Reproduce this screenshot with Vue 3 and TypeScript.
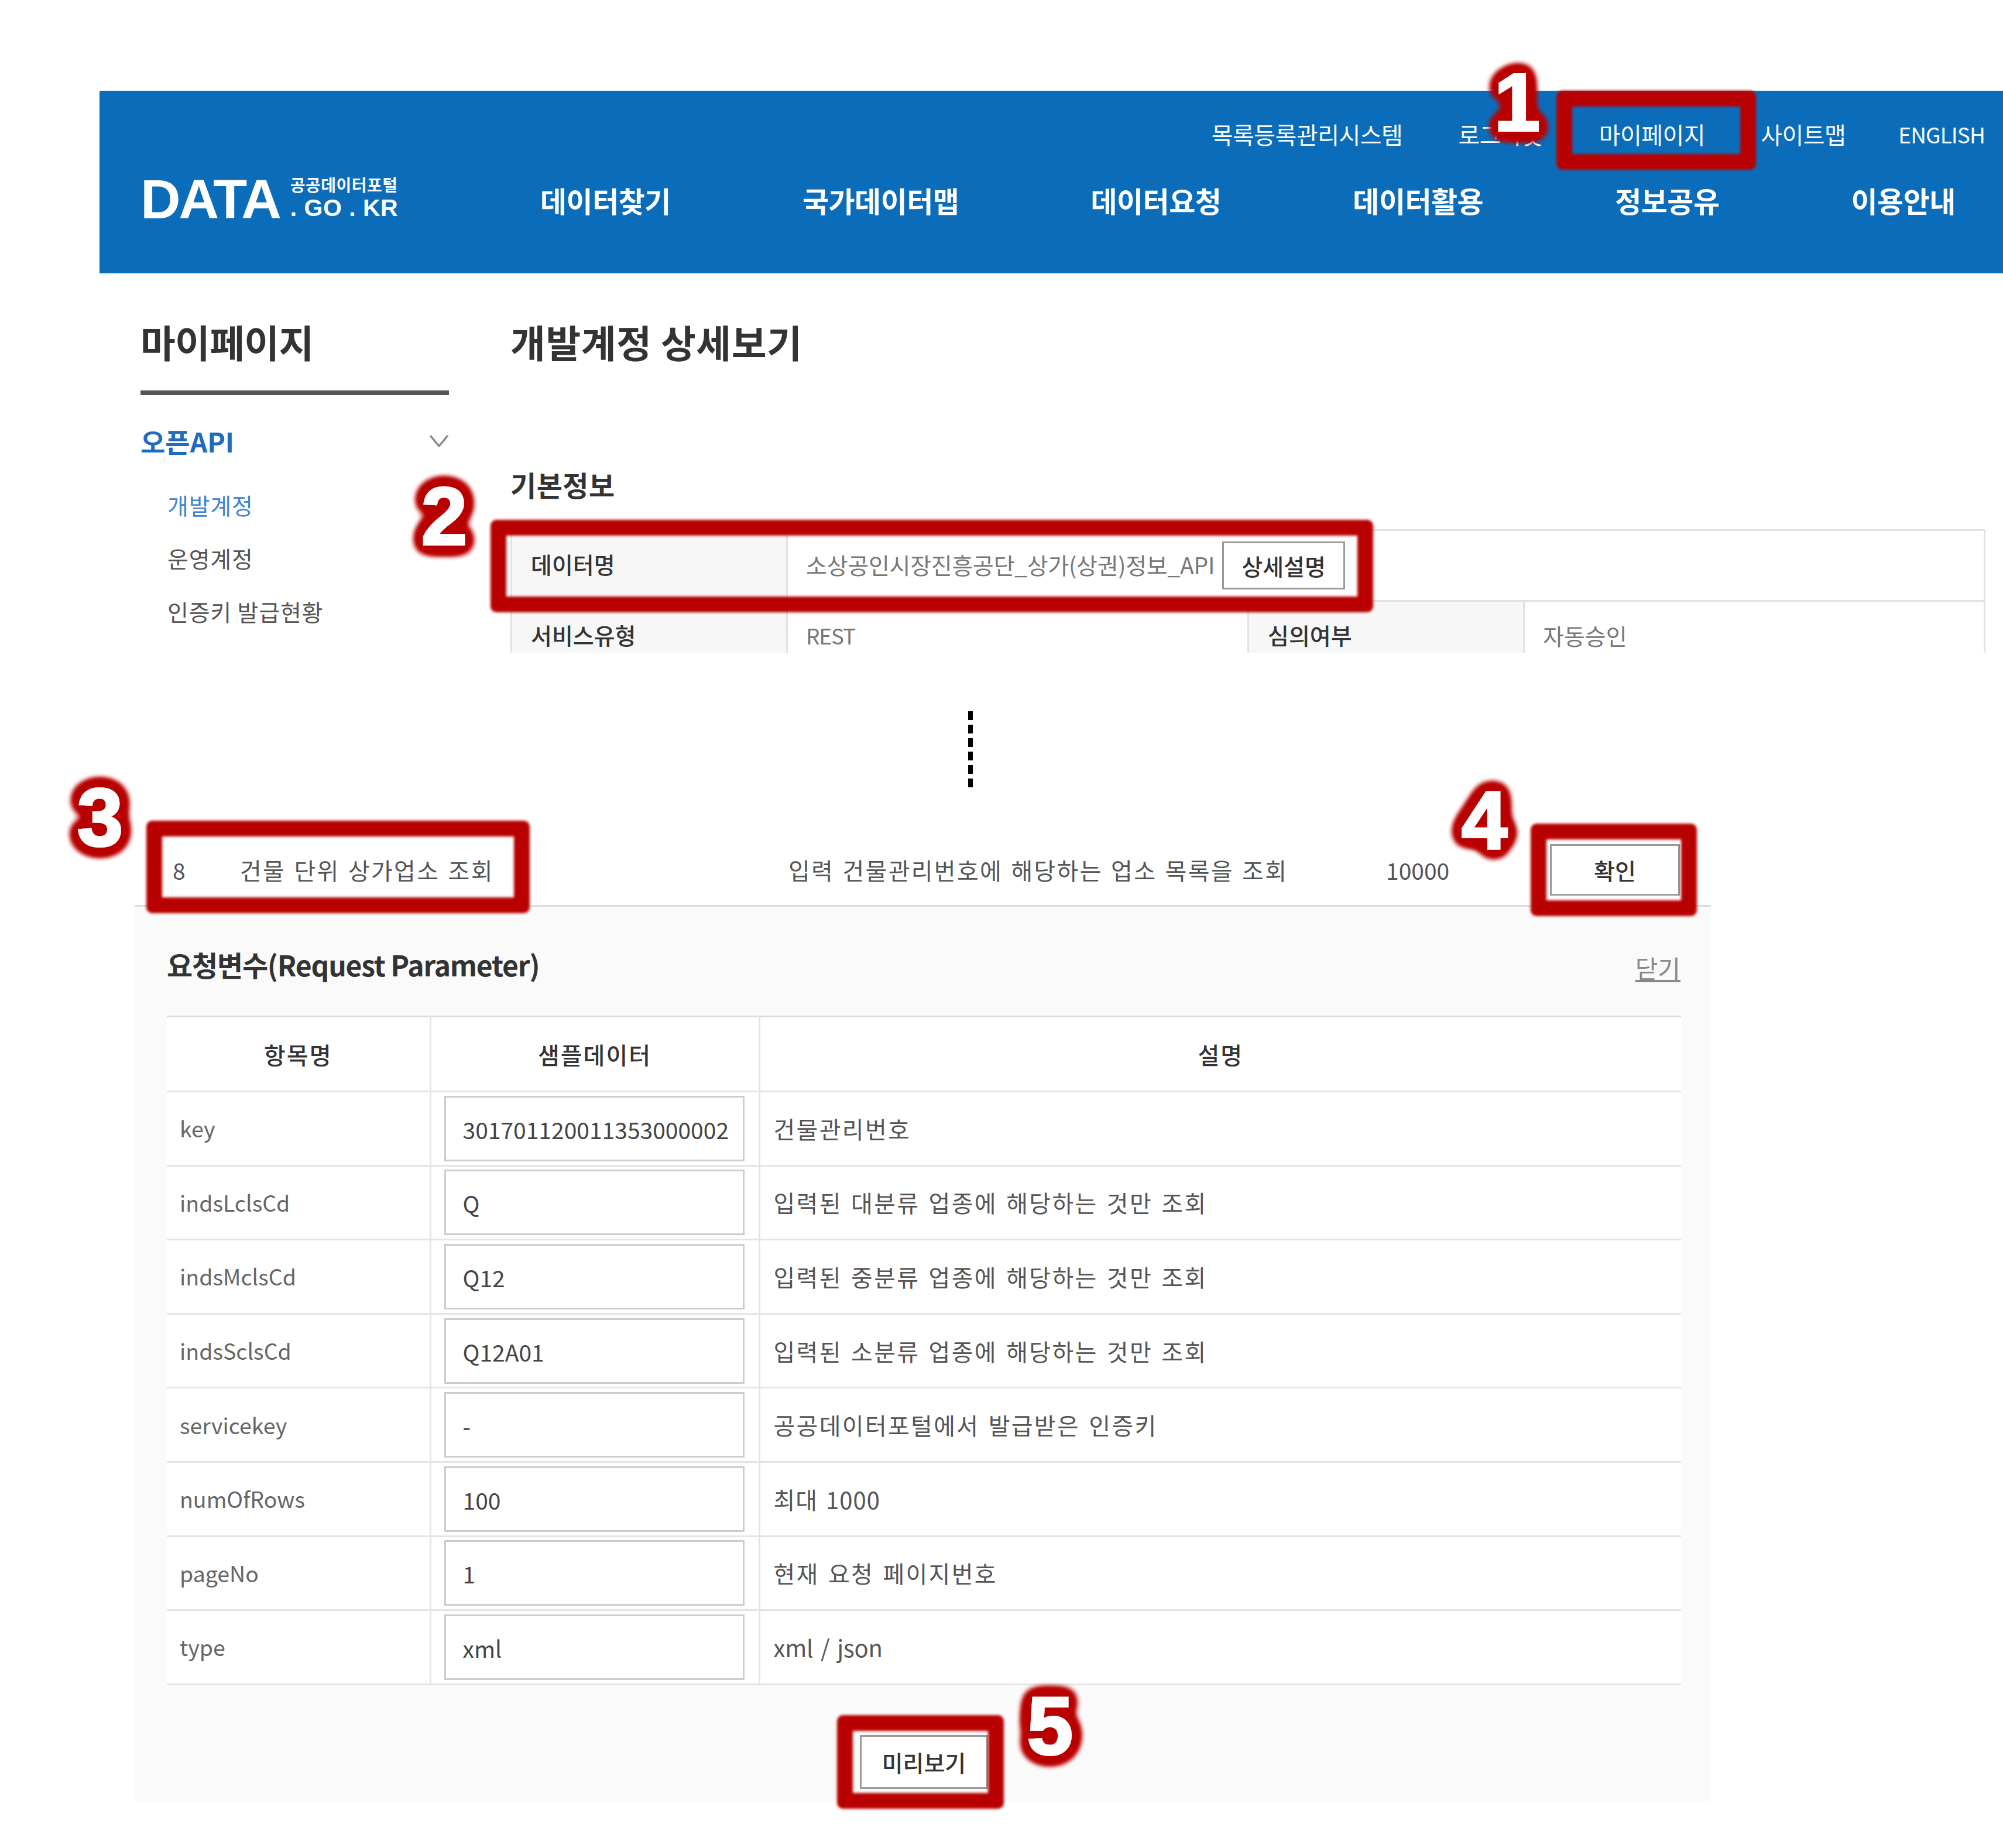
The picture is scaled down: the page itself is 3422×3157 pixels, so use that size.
<template>
  <div class="page">
    <header class="top">
      <nav class="util">
        <a v-for="item in utilLinks" :key="item" :class="{ en: item === 'ENGLISH' }">{{ item }}</a>
      </nav>
      <div class="main-bar">
        <div class="logo">
          <span class="logo-data">DATA</span>
          <span class="logo-side">
            <span class="logo-kr">공공데이터포털</span>
            <span class="logo-en">. GO . KR</span>
          </span>
        </div>
        <nav class="gnb">
          <a v-for="item in mainLinks" :key="item">{{ item }}</a>
        </nav>
      </div>
    </header>

    <section class="detail">
      <aside class="side">
        <h2 class="side-title">마이페이지</h2>
        <div class="side-group">
          <span>오픈API</span>
          <svg width="34" height="22" viewBox="0 0 34 22" fill="none">
            <path d="M2 2 L17 20 L32 2" stroke="#8a8a8a" stroke-width="3.5" />
          </svg>
        </div>
        <ul class="side-list">
          <li class="on">개발계정</li>
          <li>운영계정</li>
          <li>인증키 발급현황</li>
        </ul>
      </aside>
      <div class="detail-main">
        <h2 class="page-title">개발계정 상세보기</h2>
        <h3 class="sub-title">기본정보</h3>
        <div class="info">
          <div class="info-row">
            <div class="info-th">데이터명</div>
            <div class="info-td wide">
              <span>소상공인시장진흥공단_상가(상권)정보_API</span>
              <button class="btn btn-detail">상세설명</button>
            </div>
          </div>
          <div class="info-row">
            <div class="info-th">서비스유형</div>
            <div class="info-td mid"><span class="rest">REST</span></div>
            <div class="info-th">심의여부</div>
            <div class="info-td">자동승인</div>
          </div>
        </div>
      </div>
    </section>

    <div class="dots"></div>

    <section class="op">
      <div class="op-row">
        <span class="op-no">8</span>
        <span class="op-name">건물 단위 상가업소 조회</span>
        <span class="op-desc">입력 건물관리번호에 해당하는 업소 목록을 조회</span>
        <span class="op-count">10000</span>
        <button class="btn btn-ok">확인</button>
      </div>
      <div class="panel">
        <div class="panel-head">
          <h3>요청변수(Request Parameter)</h3>
          <a class="close">닫기</a>
        </div>
        <table class="params">
          <colgroup>
            <col class="c1" />
            <col class="c2" />
            <col />
          </colgroup>
          <thead>
            <tr>
              <th>항목명</th>
              <th>샘플데이터</th>
              <th>설명</th>
            </tr>
          </thead>
          <tbody>
            <tr v-for="row in params" :key="row.name">
              <td class="name">{{ row.name }}</td>
              <td class="sample"><div class="field">{{ row.sample }}</div></td>
              <td class="desc" :class="row.name">{{ row.desc }}</td>
            </tr>
          </tbody>
        </table>
        <div class="panel-foot">
          <button class="btn btn-preview">미리보기</button>
        </div>
      </div>
    </section>

    <!-- 빨간 표시 -->
    <div v-for="n in 5" :key="'box' + n" class="mark" :class="'mark-' + n"></div>
    <svg class="numbers" width="3422" height="3157" viewBox="0 0 3422 3157">
      <defs>
        <filter id="halo" x="-60%" y="-60%" width="220%" height="220%">
          <feGaussianBlur in="SourceAlpha" stdDeviation="13" result="wide" />
          <feComponentTransfer in="wide" result="edge">
            <feFuncA type="linear" slope="14" intercept="-0.3" />
          </feComponentTransfer>
          <feFlood flood-color="#b90000" />
          <feComposite in2="edge" operator="in" />
          <feGaussianBlur stdDeviation="2" result="ring" />
          <feMerge>
            <feMergeNode in="ring" />
            <feMergeNode in="SourceGraphic" />
          </feMerge>
        </filter>
      </defs>
      <text v-for="d in digits" :key="d.n" :x="d.x" :y="d.y" filter="url(#halo)">{{ d.n }}</text>
    </svg>
  </div>
</template>

<script setup lang="ts">
interface ParamRow {
  name: string
  sample: string
  desc: string
}

const utilLinks = ['목록등록관리시스템', '로그아웃', '마이페이지', '사이트맵', 'ENGLISH']
const mainLinks = ['데이터찾기', '국가데이터맵', '데이터요청', '데이터활용', '정보공유', '이용안내']

const params: ParamRow[] = [
  { name: 'key', sample: '301701120011353000002', desc: '건물관리번호' },
  { name: 'indsLclsCd', sample: 'Q', desc: '입력된 대분류 업종에 해당하는 것만 조회' },
  { name: 'indsMclsCd', sample: 'Q12', desc: '입력된 중분류 업종에 해당하는 것만 조회' },
  { name: 'indsSclsCd', sample: 'Q12A01', desc: '입력된 소분류 업종에 해당하는 것만 조회' },
  { name: 'servicekey', sample: '-', desc: '공공데이터포털에서 발급받은 인증키' },
  { name: 'numOfRows', sample: '100', desc: '최대 1000' },
  { name: 'pageNo', sample: '1', desc: '현재 요청 페이지번호' },
  { name: 'type', sample: 'xml', desc: 'xml / json' }
]

const digits = [
  { n: 1, x: 2553, y: 223 },
  { n: 2, x: 720, y: 930 },
  { n: 3, x: 132, y: 1444 },
  { n: 4, x: 2497, y: 1450 },
  { n: 5, x: 1755, y: 2997 }
]
</script>

<style>
html,
body {
  margin: 0;
  background: #fff;
}
</style>

<style scoped>
.page {
  position: relative;
  width: 3422px;
  height: 3157px;
  padding-top: 155px;
  box-sizing: border-box;
  overflow: hidden;
  background: #fff;
  font-family: "Noto Sans CJK KR", "Noto Sans", sans-serif;
  font-size: 39px;
  color: #555;
}

h2,
h3,
ul {
  margin: 0;
  padding: 0;
}

li {
  list-style: none;
}

.top {
  margin-left: 170px;
  height: 312px;
  background: #0b6dba;
  color: #fff;
}

.util {
  display: flex;
  justify-content: flex-end;
  gap: 95px;
  padding: 50px 31px 0 0;
  height: 48px;
  line-height: 48px;
  font-size: 40px;
  letter-spacing: -0.5px;
}

.util .en {
  margin-left: -5px;
  font-size: 37px;
  letter-spacing: -0.9px;
}

.main-bar {
  display: flex;
  align-items: center;
  margin-top: 51px;
  padding-left: 70px;
}

.logo {
  display: flex;
  align-items: flex-end;
  width: 683px;
  height: 80px;
  margin-top: -4px;
}

.logo-data {
  font-family: "Liberation Sans", sans-serif;
  font-size: 95px;
  font-weight: 700;
  line-height: 80px;
  letter-spacing: -3px;
}

.logo-side {
  display: flex;
  flex-direction: column;
  margin-left: 18px;
}

.logo-kr {
  font-size: 28px;
  font-weight: 700;
  line-height: 30px;
  letter-spacing: 0.5px;
}

.logo-en {
  font-family: "Liberation Sans", sans-serif;
  font-size: 41px;
  font-weight: 700;
  line-height: 50px;
  letter-spacing: 0.5px;
  white-space: nowrap;
}

.gnb {
  display: flex;
  gap: 225px;
  font-size: 49px;
  font-weight: 700;
  letter-spacing: -0.5px;
  line-height: 70px;
}

.detail {
  display: flex;
  height: 648px;
  overflow: hidden;
  padding-left: 240px;
}

.side {
  width: 527px;
  margin-right: 105px;
  flex: none;
}

.side-title {
  padding-top: 70px;
  height: 130px;
  line-height: 92px;
  font-size: 65px;
  font-weight: 700;
  color: #333;
  border-bottom: 8px solid #555;
  letter-spacing: -0.7px;
}

.side-group {
  display: flex;
  justify-content: space-between;
  align-items: center;
  margin-top: 48px;
  height: 60px;
  font-size: 46px;
  font-weight: 700;
  color: #1f6bc0;
  letter-spacing: 0;
}

.side-list {
  margin-top: 54px;
  padding-left: 46px;
}

.side-list li {
  height: 91px;
  line-height: 50px;
  letter-spacing: 0.8px;
}

.side-list li.on {
  color: #3f84d2;
}

.detail-main {
  flex: 1;
  padding-right: 30px;
}

.page-title {
  padding-top: 70px;
  line-height: 92px;
  font-size: 65px;
  font-weight: 700;
  color: #333;
  letter-spacing: 0.6px;
}

.sub-title {
  margin-top: 163px;
  line-height: 70px;
  font-size: 48px;
  font-weight: 700;
  color: #333;
  letter-spacing: 0.5px;
}

.info {
  margin-top: 42px;
  border-top: 3px solid #e2e2e2;
  border-left: 3px solid #e2e2e2;
}

.info-row {
  display: flex;
  height: 118px;
  border-bottom: 3px solid #e2e2e2;
}

.info-th {
  width: 436px;
  flex: none;
  padding-left: 32px;
  line-height: 113px;
  background: #f7f7f7;
  color: #333;
  font-weight: 500;
  border-right: 3px solid #e2e2e2;
}

.info-td {
  flex: 1;
  display: flex;
  align-items: center;
  padding-left: 31px;
  padding-bottom: 4px;
  color: #777;
  border-right: 3px solid #e2e2e2;
  white-space: nowrap;
}

.info-td.wide span {
  letter-spacing: -0.25px;
}

.info-td.mid {
  flex: none;
  width: 788px;
  box-sizing: border-box;
}

.rest {
  font-size: 37px;
  letter-spacing: -1.2px;
}

.btn {
  box-sizing: border-box;
  padding: 0;
  background: #fff;
  border: 3px solid #9a9a9a;
  font-family: inherit;
  font-size: 39px;
  font-weight: 500;
  color: #333;
}

.btn-detail {
  width: 210px;
  height: 82px;
  margin-left: 13px;
  margin-top: 4px;
}

.dots {
  width: 8px;
  height: 130px;
  margin: 100px 0 55px 1654px;
  background: repeating-linear-gradient(#000 0 15px, transparent 15px 23px);
}

.op {
  margin-left: 230px;
  width: 2693px;
}

.op-row {
  display: flex;
  align-items: center;
  height: 149px;
  padding-top: 26px;
  color: #555;
  border-bottom: 3px solid #ddd;
  box-sizing: border-box;
  white-space: nowrap;
}

.op-no {
  width: 180px;
  padding-left: 65px;
  box-sizing: border-box;
  flex: none;
}

.op-name,
.op-desc {
  font-size: 40px;
  letter-spacing: 2.3px;
  word-spacing: 3px;
  flex: none;
}

.op-name {
  width: 937px;
}

.op-desc {
  width: 1021px;
}

.op-count {
  width: 280px;
  flex: none;
}

.btn-ok {
  width: 222px;
  height: 88px;
}

.panel {
  height: 1528px;
  box-sizing: border-box;
  padding: 0 51px 0 55px;
  background: #fafafa;
}

.panel-head {
  display: flex;
  justify-content: space-between;
  align-items: center;
  box-sizing: border-box;
  padding-top: 10px;
  height: 186px;
}

.panel-head h3 {
  font-size: 48px;
  font-weight: 700;
  color: #333;
  letter-spacing: -1.2px;
}

.close {
  color: #888;
  font-size: 42px;
  text-decoration: underline;
  margin-top: 10px;
  margin-right: 1px;
}

.params {
  width: 100%;
  table-layout: fixed;
  border-collapse: collapse;
  background: #fff;
  border-top: 3px solid #ddd;
}

.params .c1 {
  width: 450px;
}

.params .c2 {
  width: 562px;
}

.params th,
.params td {
  border-bottom: 3px solid #e4e4e4;
  border-right: 3px solid #e4e4e4;
  padding: 0;
  height: 126.6px;
  box-sizing: border-box;
}

.params th:last-child,
.params td:last-child {
  border-right: none;
}

.params th {
  height: 128px;
  font-size: 40px;
  letter-spacing: 2px;
  font-weight: 500;
  color: #333;
}

.params td.name {
  padding: 0 0 2px 22px;
  font-size: 37.5px;
  color: #666;
}

.params td.desc {
  padding-left: 23px;
  font-size: 40px;
  color: #555;
  letter-spacing: 2.3px;
  word-spacing: 4px;
}

.params td.desc.numOfRows {
  letter-spacing: 1px;
}

.params td.desc.type {
  letter-spacing: -0.2px;
}

.params td.sample {
  padding: 0 24px 0 22px;
}

.field {
  box-sizing: border-box;
  height: 112px;
  line-height: 108px;
  padding-left: 29px;
  background: #fff;
  border: 3px solid #ccc;
  color: #444;
  white-space: nowrap;
}

.panel-foot {
  display: flex;
  justify-content: center;
  padding-top: 85px;
}

.btn-preview {
  width: 219px;
  height: 92px;
}

.mark {
  position: absolute;
  box-sizing: border-box;
  border: 27px solid #b90000;
  border-radius: 10px;
  filter: blur(2px);
}

.mark-1 {
  left: 2659px;
  top: 155px;
  width: 341px;
  height: 135px;
}

.mark-2 {
  left: 838px;
  top: 888px;
  width: 1508px;
  height: 158px;
}

.mark-3 {
  left: 250px;
  top: 1402px;
  width: 655px;
  height: 158px;
}

.mark-4 {
  left: 2615px;
  top: 1407px;
  width: 284px;
  height: 158px;
}

.mark-5 {
  left: 1430px;
  top: 2930px;
  width: 285px;
  height: 160px;
}

.numbers {
  position: absolute;
  left: 0;
  top: 0;
  pointer-events: none;
}

.numbers text {
  font-family: "Liberation Sans", sans-serif;
  font-size: 140px;
  font-weight: 700;
  fill: #fff;
  stroke: #fff;
  stroke-width: 4px;
}
</style>
